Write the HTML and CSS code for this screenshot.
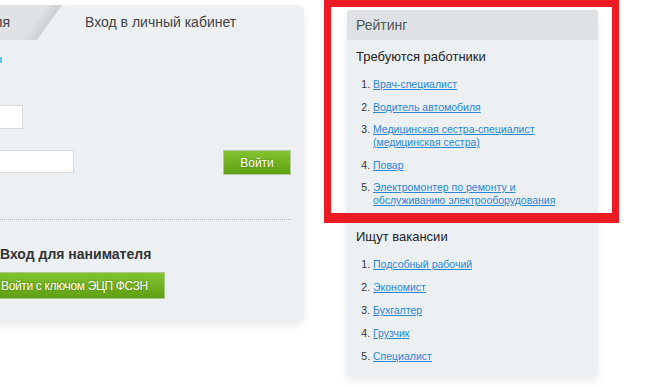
FILE: index.html
```html
<!DOCTYPE html>
<html lang="ru">
<head>
<meta charset="utf-8">
<title>Вход и рейтинг</title>
<link rel="stylesheet" href="styles.css">
</head>
<body>
<div class="page">
  <section class="login">
    <div class="tabs">
      <div class="tab tab-off"><span>Вход для соискателя</span></div>
      <div class="tab tab-on">Вход в личный кабинет</div>
    </div>
    <div class="login-body">
      <div class="hint"></div>
      <div class="row row-1">
        <input class="field field-short" type="text">
      </div>
      <div class="row row-2">
        <input class="field field-long" type="password">
        <button class="btn btn-small" type="button">Войти</button>
      </div>
      <div class="divider"></div>
      <h2 class="emp-title">Вход для нанимателя</h2>
      <button class="btn btn-ecp" type="button">Войти с ключом ЭЦП ФСЗН</button>
    </div>
  </section>

  <aside class="rating">
    <div class="rating-head">Рейтинг</div>
    <div class="rating-body">
      <h3 class="rating-title">Требуются работники</h3>
      <ol class="rating-list">
        <li><a href="#">Врач-специалист</a></li>
        <li><a href="#">Водитель автомобиля</a></li>
        <li><a href="#">Медицинская сестра-специалист (медицинская сестра)</a></li>
        <li><a href="#">Повар</a></li>
        <li><a href="#">Электромонтер по ремонту и обслуживанию электрооборудования</a></li>
      </ol>
      <h3 class="rating-title rating-title-2">Ищут вакансии</h3>
      <ol class="rating-list rating-list-2">
        <li><a href="#">Подсобный рабочий</a></li>
        <li><a href="#">Экономист</a></li>
        <li><a href="#">Бухгалтер</a></li>
        <li><a href="#">Грузчик</a></li>
        <li><a href="#">Специалист</a></li>
      </ol>
    </div>
  </aside>

  <div class="highlight"></div>
</div>
</body>
</html>
```

FILE: styles.css
```css
* { box-sizing: border-box; }

html, body {
  margin: 0;
  padding: 0;
  background: #fff;
  overflow: hidden;
}

body {
  font-family: "Liberation Sans", Arial, sans-serif;
  color: #333;
}

.page {
  position: relative;
  display: flex;
  align-items: flex-start;
  padding-top: 5px;
  height: 387px;
}

/* ---------- Login panel ---------- */
.login {
  flex: none;
  margin-left: -10px;
  width: 314px;
  height: 316px;
  background: #edf0f3;
  border-radius: 6px;
  overflow: hidden;
  box-shadow: 0 5px 9px rgba(0, 0, 0, 0.08);
}

.tabs {
  display: flex;
  height: 35px;
  background: #fff;
}

.tab {
  height: 35px;
  font-size: 14px;
  color: #444;
  line-height: 35px;
  white-space: nowrap;
}

.tab-off {
  position: relative;
  z-index: 1;
  flex: none;
  width: 72px;
  display: flex;
  justify-content: flex-end;
  padding-right: 52px;
  background: linear-gradient(125deg, #dfe3e6 0%, #dfe3e6 58%, #cbd0d4 74%);
  clip-path: polygon(0 0, 72px 0, 47px 35px, 0 35px);
}

.tab-on {
  flex: 1;
  margin-left: -25px;
  padding-left: 48px;
  background: #edf0f3;
  clip-path: polygon(0 35px, 18px 8px, 21px 3px, 25px 0.5px, 30px 0, 100% 0, 100% 100%, 0 100%);
}

.login-body {
  padding: 0 13px 0 10px;
}

.hint {
  margin-top: 17px;
  margin-left: -10px;
  width: 12px;
  height: 6px;
  background: #63c6f2;
}

.row { display: flex; }

.row-1 { margin-top: 42px; }

.row-2 {
  margin-top: 21px;
  justify-content: space-between;
  align-items: flex-start;
}

.field {
  display: block;
  margin: 0;
  padding: 0 4px;
  border: 1px solid #d9dadb;
  background: #fff;
  font: 12px "Liberation Sans", Arial, sans-serif;
  outline: none;
}

.field-short {
  margin-left: -37px;
  width: 60px;
  height: 24px;
}

.field-long {
  margin-left: -40px;
  width: 114px;
  height: 23px;
}

.btn {
  display: block;
  margin: 0;
  border: 1px solid #b7c7a6;
  background: linear-gradient(#84c330, #5f9f12);
  color: #fff;
  font: 12px "Liberation Sans", Arial, sans-serif;
  text-shadow: 0 0 2px rgba(40, 70, 0, 0.55);
  cursor: pointer;
  padding: 0;
}

.btn-small {
  width: 68px;
  height: 25px;
}

.divider {
  margin-top: 44px;
  margin-left: -10px;
  border-top: 1px dotted #b4b9bd;
}

.emp-title {
  margin: 25px 0 0;
  font-size: 14px;
  line-height: 18px;
  font-weight: bold;
  color: #333;
}

.btn-ecp {
  margin-top: 9px;
  margin-left: -9px;
  width: 174px;
  height: 27px;
  padding-left: 9px;
  text-align: left;
  letter-spacing: -0.35px;
  border-color: #a9c58a;
}

/* ---------- Rating panel ---------- */
.rating {
  flex: none;
  margin-left: 43px;
  margin-top: 5px;
  width: 251px;
  background: #edf0f3;
  border-radius: 4px;
  box-shadow: 0 5px 9px rgba(0, 0, 0, 0.08);
}

.rating-head {
  height: 30px;
  padding-left: 9px;
  line-height: 30px;
  font-size: 14px;
  color: #555;
  background: #dee2e5;
  border-radius: 4px 4px 0 0;
}

.rating-body {
  padding: 0 9px 13px;
}

.rating-title {
  margin: 9px 0 0;
  font-size: 13px;
  line-height: 16px;
  font-weight: normal;
  color: #222;
}

.rating-title-2 { margin-top: 22px; }

.rating-list {
  margin: 13px 0 0;
  padding-left: 17px;
  font-size: 10.5px;
  line-height: 13px;
  color: #333;
}

.rating-list li { margin-bottom: 9.5px; }
.rating-list-2 li { margin-bottom: 10px; }
.rating-list li:last-child { margin-bottom: 0; }

.rating-list a {
  color: #2b86d6;
  text-decoration: underline;
}

/* ---------- Annotation frame ---------- */
.highlight {
  position: absolute;
  left: 324px;
  top: 0;
  width: 295px;
  height: 223px;
  border: 7px solid #ed1c24;
  border-bottom-width: 10px;
  pointer-events: none;
}
```
